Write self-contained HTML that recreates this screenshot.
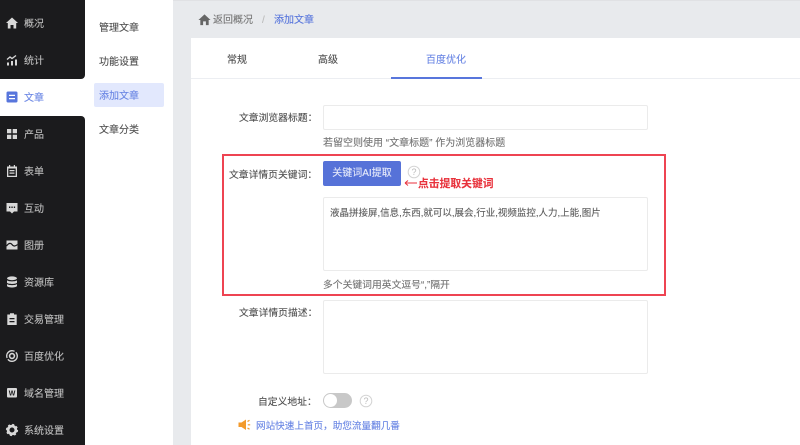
<!DOCTYPE html>
<html lang="zh"><head><meta charset="utf-8">
<style>
html,body{margin:0;padding:0;width:800px;height:445px;overflow:hidden;background:#fff}
body{font-family:"Liberation Sans","Noto Sans CJK SC",sans-serif;font-size:10px;color:#505050;position:relative;filter:blur(.3px)}
.a{position:absolute;white-space:nowrap;line-height:14px;-webkit-text-stroke:.12px currentColor}
.box{position:absolute;box-sizing:border-box;background:#fff;border:1px solid #ebebeb;border-radius:2px}
.m{position:absolute;left:24px;color:#bdbdbd;line-height:14px;white-space:nowrap;-webkit-text-stroke:.12px currentColor}
svg{position:absolute}
.i{fill:#d8d8d8}
.l{color:#505050;font-size:9.800px}
.h{color:#747474}
</style></head><body>
<div style="position:absolute;left:173px;top:0;width:627px;height:445px;background:#e8eaed"></div>
<div style="position:absolute;left:173px;top:0;width:627px;height:1px;background:#e0e1e4"></div>
<div style="position:absolute;left:85px;top:0;width:88px;height:445px;background:#fff"></div>
<div style="position:absolute;left:191px;top:38px;width:609px;height:407px;background:#fff"></div>
<div style="position:absolute;left:191px;top:78px;width:609px;height:1px;background:#eceef2"></div>
<div style="position:absolute;left:391px;top:77px;width:91px;height:2px;background:#5876dc"></div>

<!-- sidebar -->
<div style="position:absolute;left:0;top:0;width:85px;height:79px;background:#1b1b1d;border-bottom-right-radius:4px"></div>
<div style="position:absolute;left:0;top:116px;width:85px;height:329px;background:#1b1b1d;border-top-right-radius:4px"></div>

<svg style="left:5px;top:16px" width="14" height="14" viewBox="0 0 14 14"><path class="i" d="M7 1.500 13 7h-1.800v5.500H8.500V9h-3v3.500H2.800V7H1z"/></svg>
<div class="m" style="top:18px">概况</div>
<svg style="left:5px;top:53px" width="14" height="14" viewBox="0 0 14 14"><path class="i" d="M2 9.500h2v3H2zM6 8h2v4.500H6zM10 6.500h2v6h-2z"/><path d="M2 6.500 5 4l2 1.500 4-3" fill="none" stroke="#d8d8d8" stroke-width="1.300"/></svg>
<div class="m" style="top:55px">统计</div>
<svg style="left:5px;top:90px" width="14" height="14" viewBox="0 0 14 14"><path fill="#5876dc" d="M3 1.500h8a1.500 1.500 0 0 1 1.500 1.500v8a1.500 1.500 0 0 1-1.500 1.500H3A1.500 1.500 0 0 1 1.500 11V3A1.500 1.500 0 0 1 3 1.500z"/><path fill="#fff" d="M4 4.800h6V6H4zM4 8h6v1.200H4z"/></svg>
<div class="m" style="top:92px;color:#6a86e4">文章</div>
<svg style="left:5px;top:127px" width="14" height="14" viewBox="0 0 14 14"><path class="i" d="M2 2h4.300v4.300H2zM7.700 2H12v4.300H7.700zM2 7.700h4.300V12H2zM7.700 7.700H12V12H7.700z"/></svg>
<div class="m" style="top:129px">产品</div>
<svg style="left:5px;top:164px" width="14" height="14" viewBox="0 0 14 14"><path class="i" fill-rule="evenodd" d="M2 2.500h2V1h1.200v1.500h3.600V1H10v1.500h2V13H2zM3.300 4.500V11.700h7.400V4.500zM4.500 6h5v1.200h-5zM4.500 8.500h5v1.200h-5z"/></svg>
<div class="m" style="top:166px">表单</div>
<svg style="left:5px;top:201px" width="14" height="14" viewBox="0 0 14 14"><path class="i" fill-rule="evenodd" d="M1.500 2h11v8.500H9L7 12.500 5 10.500H1.500zM4 5.500v1.500h1.300V5.500zM6.400 5.500v1.500h1.300V5.500zM8.800 5.500v1.500h1.300V5.500z"/></svg>
<div class="m" style="top:203px">互动</div>
<svg style="left:5px;top:238px" width="14" height="14" viewBox="0 0 14 14"><path class="i" d="M1.500 2.500h11v9h-11z"/><path d="M1.500 8C4 4.500 6 5 7 6.500s3 2.500 5.500 0" fill="none" stroke="#1b1b1d" stroke-width="1.200"/></svg>
<div class="m" style="top:240px">图册</div>
<svg style="left:5px;top:275px" width="14" height="14" viewBox="0 0 14 14"><ellipse class="i" cx="7" cy="3.300" rx="5" ry="1.900"/><path class="i" d="M2 5.300c1 1.500 9 1.500 10 0V7.800c-1 1.600-9 1.600-10 0zM2 9c1 1.500 9 1.500 10 0v2c-1 2-9 2-10 0z"/></svg>
<div class="m" style="top:277px">资源库</div>
<svg style="left:5px;top:312px" width="14" height="14" viewBox="0 0 14 14"><path class="i" fill-rule="evenodd" d="M2.300 2.500H5V1.300h4v1.200h2.700V13H2.300zM4.500 6v1.200h5V6zM4.500 9v1.200h5V9z"/></svg>
<div class="m" style="top:314px">交易管理</div>
<svg style="left:5px;top:349px" width="14" height="14" viewBox="0 0 14 14"><circle cx="7" cy="7" r="5.300" fill="none" stroke="#d8d8d8" stroke-width="1.300" stroke-dasharray="13 1.500"/><circle cx="7" cy="7" r="2.400" fill="none" stroke="#d8d8d8" stroke-width="1.600"/></svg>
<div class="m" style="top:351px">百度优化</div>
<svg style="left:5px;top:386px" width="14" height="14" viewBox="0 0 14 14"><rect class="i" x="2" y="2" width="10" height="9.500" rx="1"/><text x="7" y="9.500" font-size="7" font-weight="700" text-anchor="middle" fill="#1b1b1d" font-family="Liberation Sans">W</text></svg>
<div class="m" style="top:388px">域名管理</div>
<svg style="left:5px;top:423px" width="14" height="14" viewBox="0 0 14 14"><circle cx="7" cy="7" r="3.900" fill="none" stroke="#d8d8d8" stroke-width="2.800"/><circle cx="7" cy="7" r="5.300" fill="none" stroke="#d8d8d8" stroke-width="1.600" stroke-dasharray="2 2.160"/></svg>
<div class="m" style="top:425px">系统设置</div>

<!-- secondary menu -->
<div class="a" style="left:99px;top:22px">管理文章</div>
<div class="a" style="left:99px;top:56px">功能设置</div>
<div style="position:absolute;left:94px;top:83px;width:70px;height:24px;background:#e2e8fd;border-radius:2px"></div>
<div class="a" style="left:99px;top:90px;color:#6a86e4">添加文章</div>
<div class="a" style="left:99px;top:124px">文章分类</div>

<!-- breadcrumb -->
<svg style="left:198px;top:13px" width="13" height="13" viewBox="0 0 14 14"><path fill="#666" d="M7 1.500 13.500 7.500h-2V13H8.500V9h-3v4H2.500V7.500h-2z"/></svg>
<div class="a" style="left:213px;top:14px;color:#777">返回概况</div>
<div class="a" style="left:262px;top:14px;color:#bbb">/</div>
<div class="a" style="left:274px;top:14px;color:#5876dc">添加文章</div>

<!-- tabs -->
<div class="a" style="left:227px;top:54px">常规</div>
<div class="a" style="left:318px;top:54px">高级</div>
<div class="a" style="left:426px;top:54px;color:#6a86e4">百度优化</div>

<!-- form -->
<div class="a l" style="left:239px;top:112px">文章浏览器标题：</div>
<div class="box" style="left:323px;top:105px;width:325px;height:25px"></div>
<div class="a h" style="left:323px;top:137px">若留空则使用 “文章标题” 作为浏览器标题</div>

<div style="position:absolute;box-sizing:border-box;left:222px;top:154px;width:444px;height:142px;border:2px solid #ee4452"></div>
<div class="a l" style="left:229px;top:169px">文章详情页关键词：</div>
<div style="position:absolute;left:323px;top:161px;width:78px;height:25px;background:#5672d8;border-radius:2px;color:#e6eafa;text-align:center;line-height:26px;-webkit-text-stroke:.12px currentColor">关键词AI提取</div>
<svg style="left:407px;top:165px" width="14" height="14" viewBox="0 0 14 14"><circle cx="7" cy="7" r="5.800" fill="#fff" stroke="#d4d4d4"/><text x="7" y="10" font-size="9" text-anchor="middle" fill="#bbb" font-family="Liberation Sans">?</text></svg>
<svg style="left:404px;top:179px" width="14" height="8" viewBox="0 0 14 8"><path d="M1 4h12M1 4l3-2.500M1 4l3 2.500" fill="none" stroke="#e8323c" stroke-width="1"/></svg>
<div class="a" style="left:418px;top:177px;color:#e8323c;font-weight:700;font-size:10.800px">点击提取关键词</div>
<div class="box" style="left:323px;top:197px;width:325px;height:74px"></div>
<div class="a" style="left:330px;top:207px;color:#5c5c5c;font-size:9.500px">液晶拼接屏,信息,东西,就可以,展会,行业,视频监控,人力,上能,图片</div>
<div class="a h" style="left:323px;top:279px;font-size:9.800px">多个关键词用英文逗号“,”隔开</div>

<div class="a l" style="left:239px;top:307px">文章详情页描述：</div>
<div class="box" style="left:323px;top:300px;width:325px;height:74px"></div>

<div class="a l" style="left:258px;top:396px">自定义地址：</div>
<div style="position:absolute;left:323px;top:393px;width:29px;height:15px;background:#c8c8c8;border-radius:8px"></div>
<div style="position:absolute;left:324px;top:394px;width:13px;height:13px;background:#fff;border-radius:50%"></div>
<svg style="left:359px;top:394px" width="14" height="14" viewBox="0 0 14 14"><circle cx="7" cy="7" r="5.800" fill="#fff" stroke="#d4d4d4"/><text x="7" y="10" font-size="9" text-anchor="middle" fill="#bbb" font-family="Liberation Sans">?</text></svg>
<svg style="left:238px;top:418px" width="14" height="14" viewBox="0 0 14 14"><path fill="#f39a2b" d="M0.500 4.500h3L8 1.500V12L3.500 9H.5z"/><path d="M9.500 3.500l2-1.200M9.800 6.800h2.400M9.500 10l2 1.200" stroke="#f39a2b" stroke-width="1.200" fill="none"/></svg>
<div class="a" style="left:256px;top:420px;color:#6a86e4;font-size:9.600px">网站快速上首页，助您流量翻几番</div>
</body></html>
